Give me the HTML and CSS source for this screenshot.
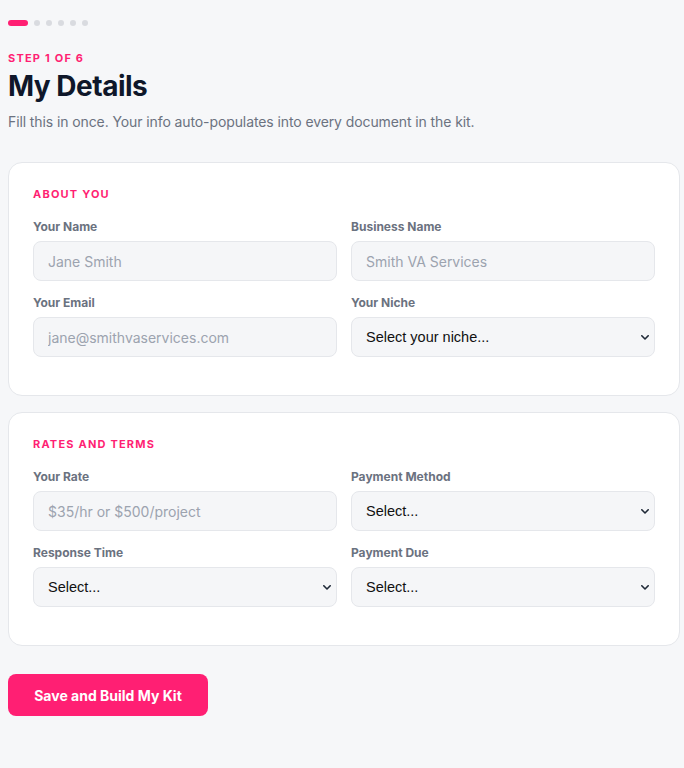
FILE: index.html
```html
<!DOCTYPE html>
<html lang="en">
<head>
<meta charset="utf-8">
<title>My Details</title>
<link rel="stylesheet" href="styles.css">
</head>
<body>
<main class="page">
  <div class="progress">
    <span class="pill"></span>
    <span class="dot"></span>
    <span class="dot"></span>
    <span class="dot"></span>
    <span class="dot"></span>
    <span class="dot"></span>
  </div>

  <div class="eyebrow">STEP 1 OF 6</div>
  <h1 class="title">My Details</h1>
  <p class="subtitle">Fill this in once. Your info auto-populates into every document in the kit.</p>

  <section class="card">
    <h2 class="section-title">ABOUT YOU</h2>
    <div class="grid">
      <div class="field">
        <label class="label">Your Name</label>
        <input class="input" type="text" placeholder="Jane Smith">
      </div>
      <div class="field">
        <label class="label">Business Name</label>
        <input class="input" type="text" placeholder="Smith VA Services">
      </div>
      <div class="field">
        <label class="label">Your Email</label>
        <input class="input" type="email" placeholder="jane@smithvaservices.com">
      </div>
      <div class="field">
        <label class="label">Your Niche</label>
        <div class="select-wrap">
          <select class="select"><option>Select your niche...</option></select>
          <svg class="chev" width="8" height="5" viewBox="0 0 8 5" aria-hidden="true"><path d="M0.8 0.8 L4 4 L7.2 0.8" fill="none" stroke="#1f2937" stroke-width="1.6" stroke-linecap="round" stroke-linejoin="round"/></svg>
        </div>
      </div>
    </div>
  </section>

  <section class="card">
    <h2 class="section-title">RATES AND TERMS</h2>
    <div class="grid">
      <div class="field">
        <label class="label">Your Rate</label>
        <input class="input" type="text" placeholder="$35/hr or $500/project">
      </div>
      <div class="field">
        <label class="label">Payment Method</label>
        <div class="select-wrap">
          <select class="select"><option>Select...</option></select>
          <svg class="chev" width="8" height="5" viewBox="0 0 8 5" aria-hidden="true"><path d="M0.8 0.8 L4 4 L7.2 0.8" fill="none" stroke="#1f2937" stroke-width="1.6" stroke-linecap="round" stroke-linejoin="round"/></svg>
        </div>
      </div>
      <div class="field">
        <label class="label">Response Time</label>
        <div class="select-wrap">
          <select class="select"><option>Select...</option></select>
          <svg class="chev" width="8" height="5" viewBox="0 0 8 5" aria-hidden="true"><path d="M0.8 0.8 L4 4 L7.2 0.8" fill="none" stroke="#1f2937" stroke-width="1.6" stroke-linecap="round" stroke-linejoin="round"/></svg>
        </div>
      </div>
      <div class="field">
        <label class="label">Payment Due</label>
        <div class="select-wrap">
          <select class="select"><option>Select...</option></select>
          <svg class="chev" width="8" height="5" viewBox="0 0 8 5" aria-hidden="true"><path d="M0.8 0.8 L4 4 L7.2 0.8" fill="none" stroke="#1f2937" stroke-width="1.6" stroke-linecap="round" stroke-linejoin="round"/></svg>
        </div>
      </div>
    </div>
  </section>

  <button class="btn" type="button">Save and Build My Kit</button>
</main>
</body>
</html>
```

FILE: styles.css
```css
* { box-sizing: border-box; }

html, body {
  margin: 0;
  background: #f6f7f9;
}

body {
  font-family: "Inter", "Liberation Sans", sans-serif;
  color: #111827;
}

.page {
  padding: 20px 4px 40px 8px;
}

.progress {
  display: flex;
  gap: 6px;
  align-items: center;
  height: 6px;
}

.pill {
  width: 20px;
  height: 6px;
  border-radius: 3px;
  background: #ff1f73;
}

.dot {
  width: 6px;
  height: 6px;
  border-radius: 50%;
  background: #d9dbe0;
}

.eyebrow {
  margin-top: 24px;
  font-size: 11px;
  line-height: 16px;
  font-weight: 700;
  letter-spacing: 1.2px;
  color: #ff1f73;
}

.title {
  margin: 3px 0 0;
  font-size: 28px;
  line-height: 34px;
  font-weight: 700;
  letter-spacing: -0.5px;
  color: #0f172a;
}

.subtitle {
  margin: 9px 0 0;
  font-size: 14px;
  line-height: 20px;
  letter-spacing: -0.1px;
  color: #6b7280;
}

.card {
  margin-top: 30px;
  background: #ffffff;
  border: 1px solid #e5e7eb;
  border-radius: 14px;
  padding: 23px 24px 24px;
}

.card + .card {
  margin-top: 16px;
}

.section-title {
  margin: 0 0 17px;
  font-size: 11px;
  line-height: 16px;
  font-weight: 700;
  letter-spacing: 1.2px;
  color: #ff1f73;
}

.grid {
  display: grid;
  grid-template-columns: 1fr 1fr;
  column-gap: 14px;
}

.field {
  display: flex;
  flex-direction: column;
  margin-bottom: 14px;
}

.label {
  font-size: 12px;
  line-height: 16px;
  font-weight: 700;
  color: #6b7280;
  margin-bottom: 6px;
}

.input,
.select {
  height: 40px;
  width: 100%;
  border: 1px solid #e5e7eb;
  border-radius: 8px;
  background: #f5f6f8;
  padding: 0 14px;
  outline: none;
}

.input {
  font-family: "Inter", "Liberation Sans", sans-serif;
  font-size: 14px;
  color: #111827;
}

.input::placeholder {
  color: #9ca3af;
}

.select-wrap {
  position: relative;
}

.select {
  display: block;
  appearance: none;
  -webkit-appearance: none;
  font-family: "Liberation Sans", Arial, sans-serif;
  font-size: 14.5px;
  color: #111111;
  padding: 0 24px 0 14px;
}

.chev {
  position: absolute;
  right: 6px;
  top: 18px;
  pointer-events: none;
}

.btn {
  margin-top: 28px;
  width: 200px;
  height: 42px;
  border: none;
  border-radius: 8px;
  background: #ff1f73;
  color: #ffffff;
  font-family: "Inter", "Liberation Sans", sans-serif;
  font-size: 14px;
  font-weight: 700;
}
```
